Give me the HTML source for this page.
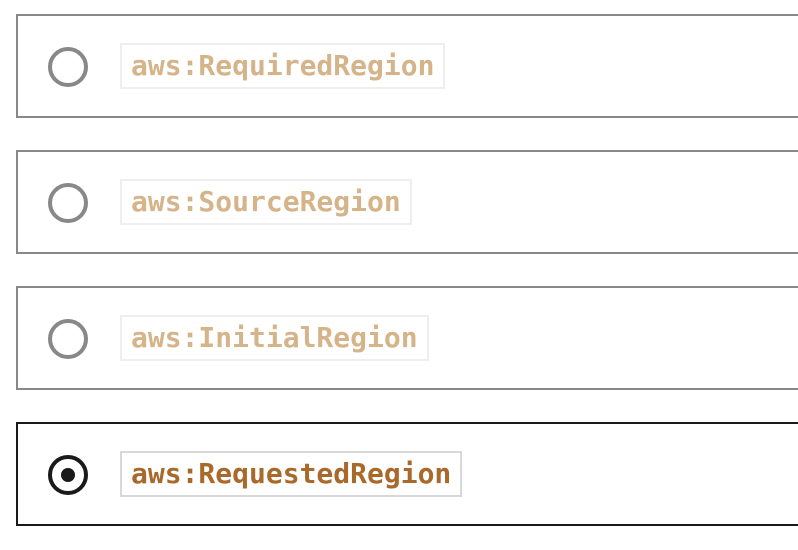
<!DOCTYPE html>
<html><head><style>
body{margin:0;background:#fff;width:798px;height:550px;overflow:hidden;position:relative}
.b{position:absolute;left:16px;width:800px;height:100px;border:2px solid #888;box-sizing:content-box}
.b.s{border-color:#1a1a1a}
.r{position:absolute;left:30px;top:31px;width:32px;height:32px;border:4px solid #888;border-radius:50%}
.s .r{border-color:#1a1a1a}
.s .r::after{content:"";position:absolute;left:9px;top:9px;width:14px;height:14px;border-radius:50%;background:#1a1a1a}
.t{position:absolute;left:102px;top:27px;height:42px;padding:0 9px;border:2px solid #eee;font:bold 28px/42px "DejaVu Sans Mono","Liberation Mono",monospace;color:#d5b48a}
.s .t{border-color:#d8d8d8;color:#a8692a}
</style></head><body>
<div class="b" style="top:14px"><div class="r"></div><div class="t">aws:RequiredRegion</div></div>
<div class="b" style="top:150px"><div class="r"></div><div class="t">aws:SourceRegion</div></div>
<div class="b" style="top:286px"><div class="r"></div><div class="t">aws:InitialRegion</div></div>
<div class="b s" style="top:422px"><div class="r"></div><div class="t">aws:RequestedRegion</div></div>
</body></html>
